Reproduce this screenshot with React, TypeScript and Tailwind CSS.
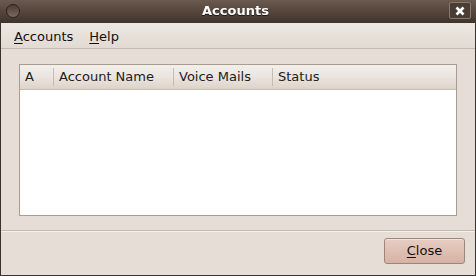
export default function App() {
  return (
    <div className="w-[476px] h-[276px] flex flex-col bg-[#3a322c] font-['DejaVu_Sans',sans-serif] text-[13px] text-[#101010] overflow-hidden">
      {/* title bar */}
      <div className="h-[23px] flex items-center px-[5px] bg-gradient-to-b from-[#6b5a4e] via-[#54463d] to-[#3e342e] text-white">
        <div className="w-[14px] h-[14px] rounded-full border border-[#2a221e] bg-gradient-to-b from-[#4a3d35] to-[#7a6a5e] ml-[1px] mb-[2px]"></div>
        <div className="flex-1 text-center font-bold text-[13px] pl-[2px] mb-[2px] drop-shadow-[0_1px_0_#1f1915]">Accounts</div>
        <div className="w-[22px] h-[17px] mb-[2px] rounded-[2px] border border-[#8a7a6e] bg-[#4a3d35] flex items-center justify-center">
          <svg width="10" height="10" viewBox="0 0 10 10">
            <path d="M1.5 1.5 L8.5 8.5 M8.5 1.5 L1.5 8.5" stroke="#ffffff" strokeWidth="2.6" />
          </svg>
        </div>
      </div>

      <div className="flex-1 flex flex-col bg-[#e6ded6] ml-[1px] mr-[1px] mb-[1px]">
        {/* menu bar */}
        <div className="h-[26px] flex items-center gap-[16px] px-[13px] pt-[3px] bg-gradient-to-b from-[#ece7e1] to-[#e3dbd3] border-b border-[#c5b9ad]">
          <span><span className="underline underline-offset-2">A</span>ccounts</span>
          <span><span className="underline underline-offset-2">H</span>elp</span>
        </div>

        {/* tree view */}
        <div className="flex-1 flex flex-col px-[18px] pt-[15px] pb-[14px]">
          <div className="flex-1 flex flex-col border border-[#a99c90] bg-white">
            <div className="h-[25px] flex items-stretch bg-gradient-to-b from-[#f2efeb] via-[#ebe5df] to-[#ddd3ca] border-b border-[#c9bcb1] text-[#202020]">
              <div className="w-[34px] flex items-center pl-[5px] border-r border-[#c8bcb0] my-[3px]">A</div>
              <div className="w-[120px] flex items-center pl-[5px] border-r border-[#c8bcb0] my-[3px]">Account Name</div>
              <div className="w-[99px] flex items-center pl-[5px] border-r border-[#c8bcb0] my-[3px]">Voice Mails</div>
              <div className="flex-1 flex items-center pl-[5px] my-[3px]">Status</div>
            </div>
            <div className="flex-1"></div>
          </div>
        </div>

        {/* button row */}
        <div className="h-[45px] flex items-start justify-end border-t border-[#c5b9ad] shadow-[inset_0_1px_0_#f4f0ec] pr-[10px] pt-[7px]">
          <button className="w-[81px] h-[26px] rounded-[3px] border border-[#9c867a] bg-gradient-to-b from-[#e8cdc2] to-[#d6b2a4] shadow-[inset_0_1px_0_#f3e2da] text-[#101010]">
            <span className="underline underline-offset-2">C</span>lose
          </button>
        </div>
      </div>
    </div>
  );
}
